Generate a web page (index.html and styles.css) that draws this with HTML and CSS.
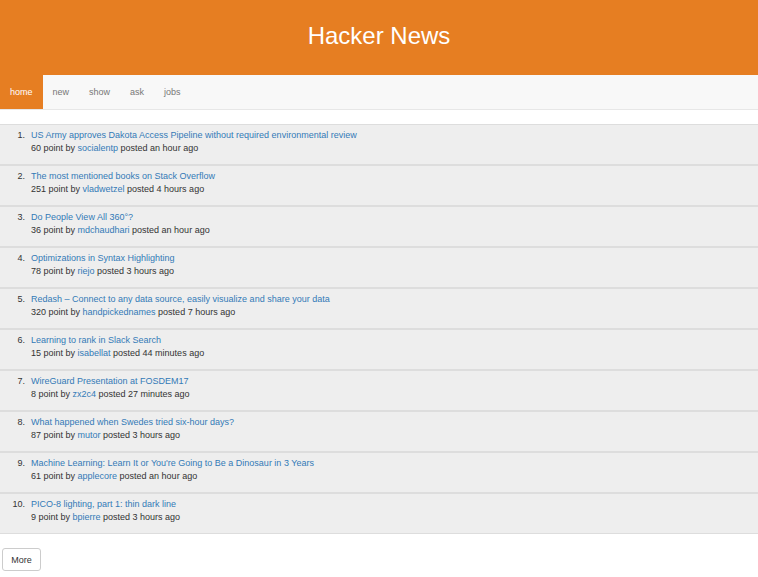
FILE: index.html
```html
<!DOCTYPE html>
<html>
<head>
<meta charset="utf-8">
<link rel="stylesheet" href="styles.css">
</head>
<body>
<header class="masthead"><h1 class="brand">Hacker News</h1></header>
<nav class="navbar">
  <a class="tab active" href="#">home</a>
  <a class="tab" href="#">new</a>
  <a class="tab" href="#">show</a>
  <a class="tab" href="#">ask</a>
  <a class="tab" href="#">jobs</a>
</nav>
<ol class="stories">
  <li class="story"><span class="num">1.</span><div class="body"><a class="title" href="#">US Army approves Dakota Access Pipeline without required environmental review</a><div class="meta">60 point by <a href="#">socialentp</a> posted an hour ago</div></div></li>
  <li class="story"><span class="num">2.</span><div class="body"><a class="title" href="#">The most mentioned books on Stack Overflow</a><div class="meta">251 point by <a href="#">vladwetzel</a> posted 4 hours ago</div></div></li>
  <li class="story"><span class="num">3.</span><div class="body"><a class="title" href="#">Do People View All 360°?</a><div class="meta">36 point by <a href="#">mdchaudhari</a> posted an hour ago</div></div></li>
  <li class="story"><span class="num">4.</span><div class="body"><a class="title" href="#">Optimizations in Syntax Highlighting</a><div class="meta">78 point by <a href="#">riejo</a> posted 3 hours ago</div></div></li>
  <li class="story"><span class="num">5.</span><div class="body"><a class="title" href="#">Redash – Connect to any data source, easily visualize and share your data</a><div class="meta">320 point by <a href="#">handpickednames</a> posted 7 hours ago</div></div></li>
  <li class="story"><span class="num">6.</span><div class="body"><a class="title" href="#">Learning to rank in Slack Search</a><div class="meta">15 point by <a href="#">isabellat</a> posted 44 minutes ago</div></div></li>
  <li class="story"><span class="num">7.</span><div class="body"><a class="title" href="#">WireGuard Presentation at FOSDEM17</a><div class="meta">8 point by <a href="#">zx2c4</a> posted 27 minutes ago</div></div></li>
  <li class="story"><span class="num">8.</span><div class="body"><a class="title" href="#">What happened when Swedes tried six-hour days?</a><div class="meta">87 point by <a href="#">mutor</a> posted 3 hours ago</div></div></li>
  <li class="story"><span class="num">9.</span><div class="body"><a class="title" href="#">Machine Learning: Learn It or You're Going to Be a Dinosaur in 3 Years</a><div class="meta">61 point by <a href="#">applecore</a> posted an hour ago</div></div></li>
  <li class="story"><span class="num">10.</span><div class="body"><a class="title" href="#">PICO-8 lighting, part 1: thin dark line</a><div class="meta">9 point by <a href="#">bpierre</a> posted 3 hours ago</div></div></li>
</ol>
<div class="footer"><button class="more">More</button></div>
</body>
</html>
```

FILE: styles.css
```css
* { box-sizing: border-box; }
html, body {
  margin: 0;
  padding: 0;
  background: #fff;
  font-family: "Liberation Sans", Arial, sans-serif;
  font-size: 9px;
  line-height: 13px;
  color: #333;
}
a { color: #337ab7; text-decoration: none; }
.masthead {
  background: #e67e22;
  height: 75px;
  display: flex;
  align-items: center;
  justify-content: center;
}
.brand {
  margin: 0;
  color: #fff;
  font-weight: normal;
  font-size: 24px;
  line-height: 28px;
  padding-bottom: 3px;
}
.navbar {
  display: flex;
  background: #f8f8f8;
  border-bottom: 1px solid #e7e7e7;
  height: 35px;
}
.tab {
  display: flex;
  align-items: center;
  padding: 1px 10px 0;
  color: #777;
  height: 34px;
}
.tab.active {
  background: #e67e22;
  color: #fff;
}
.stories {
  list-style: none;
  margin: 14px 0 0;
  padding: 0;
}
.story {
  display: flex;
  background: #eee;
  border-top: 1px solid #ddd;
  border-bottom: 1px solid #ddd;
  padding: 4px 0 9px;
}
.num {
  width: 25px;
  text-align: right;
  flex: none;
}
.body {
  margin-left: 6px;
}
.title { display: block; }
.footer {
  padding: 14px 2px 0;
}
.more {
  font-family: "Liberation Sans", Arial, sans-serif;
  font-size: 9px;
  color: #333;
  background: #fff;
  border: 1px solid #ccc;
  border-radius: 3px;
  width: 39px;
  height: 23px;
  padding: 0;
}
```
